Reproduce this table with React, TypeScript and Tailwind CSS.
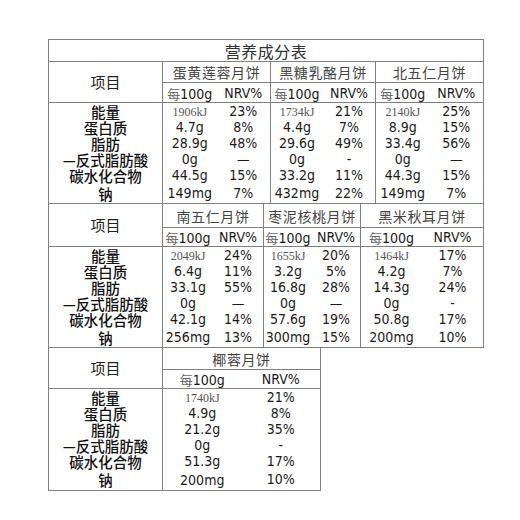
const CJK = "font-['Noto_Sans_CJK_SC',sans-serif]";
const NUM = "font-['DejaVu_Sans','Noto_Sans',sans-serif] font-stretch-condensed";

const LABELS = ["能量", "蛋白质", "脂肪", "—反式脂肪酸", "碳水化合物", "钠"];

type Product = { name: string; values: string[]; nrv: string[] };

const s1: Product[] = [
  { name: "蛋黄莲蓉月饼", values: ["1906kJ", "4.7g", "28.9g", "0g", "44.5g", "149mg"], nrv: ["23%", "8%", "48%", "—", "15%", "7%"] },
  { name: "黑糖乳酪月饼", values: ["1734kJ", "4.4g", "29.6g", "0g", "33.2g", "432mg"], nrv: ["21%", "7%", "49%", "-", "11%", "22%"] },
  { name: "北五仁月饼", values: ["2140kJ", "8.9g", "33.4g", "0g", "44.3g", "149mg"], nrv: ["25%", "15%", "56%", "—", "15%", "7%"] },
];

const s2: Product[] = [
  { name: "南五仁月饼", values: ["2049kJ", "6.4g", "33.1g", "0g", "42.1g", "256mg"], nrv: ["24%", "11%", "55%", "—", "14%", "13%"] },
  { name: "枣泥核桃月饼", values: ["1655kJ", "3.2g", "16.8g", "0g", "57.6g", "300mg"], nrv: ["20%", "5%", "28%", "—", "19%", "15%"] },
  { name: "黑米秋耳月饼", values: ["1464kJ", "4.2g", "14.3g", "0g", "50.8g", "200mg"], nrv: ["17%", "7%", "24%", "-", "17%", "10%"] },
];

const s3: Product[] = [
  { name: "椰蓉月饼", values: ["1740kJ", "4.9g", "21.2g", "0g", "51.3g", "200mg"], nrv: ["21%", "8%", "35%", "-", "17%", "10%"] },
];

function Value({ v }: { v: string }) {
  if (v.endsWith("kJ")) {
    return <span className="font-['Liberation_Serif',serif] text-[12px] text-[#555]">{v}</span>;
  }
  return <span className={`${NUM} text-[14px] text-[#1a1a1a]`}>{v}</span>;
}

function Section({
  products,
  widths,
  outer,
  headH,
  subH,
  lastH,
  title,
}: {
  products: Product[];
  widths: string[];
  outer: string;
  headH: string;
  subH: string;
  lastH: string;
  title?: string;
}) {
  const cellW = (i: number) => (i === products.length - 1 ? "flex-1" : `${widths[i]} border-r border-[#808080]`);
  return (
    <div className={outer}>
      {title && (
        <div className={`h-[22px] border-b border-[#808080] flex items-center justify-center ${CJK} text-[16px] leading-[18px] text-[#333] tracking-[0.5px]`}>
          {title}
        </div>
      )}
      <div className="flex border-b border-[#808080]">
        <div className={`w-[114px] border-r border-[#808080] flex items-center justify-center ${CJK} text-[15px] leading-[16px] text-[#222]`}>
          项目
        </div>
        {products.map((p, i) => (
          <div key={p.name} className={`${cellW(i)} flex flex-col`}>
            <div className={`${headH} border-b border-[#808080] flex items-center justify-center ${CJK} text-[14px] leading-[16px] text-[#444] tracking-[0.6px]`}>
              {p.name}
            </div>
            <div className={`${subH} flex items-center`}>
              <div className="flex-1 text-center leading-none">
                <span className={`${CJK} text-[13px] text-[#666]`}>每</span>
                <span className={`${NUM} text-[14px] text-[#1a1a1a]`}>100g</span>
              </div>
              <div className={`flex-1 text-center leading-none ${NUM} text-[14px] text-[#1a1a1a]`}>NRV%</div>
            </div>
          </div>
        ))}
      </div>
      {LABELS.map((label, r) => (
        <div key={label} className={`flex ${r === LABELS.length - 1 ? lastH : "h-[16px]"}`}>
          <div className={`w-[114px] border-r border-[#808080] flex items-center justify-center ${CJK} font-medium text-[14.5px] leading-[15px] text-[#111]`}>
            {label}
          </div>
          {products.map((p, i) => (
            <div key={p.name} className={`${cellW(i)} flex items-center leading-[15px]`}>
              <div className="flex-1 text-center">
                <Value v={p.values[r]} />
              </div>
              <div className={`flex-1 text-center ${NUM} text-[14px] text-[#1a1a1a]`}>{p.nrv[r]}</div>
            </div>
          ))}
        </div>
      ))}
    </div>
  );
}

export default function App() {
  return (
    <div className="w-[520px] h-[520px] bg-white pt-[39px] pl-[48px]">
      <Section
        title="营养成分表"
        products={s1}
        widths={["w-[108px]", "w-[105px]"]}
        outer="w-[436px] border border-[#808080]"
        headH="h-[21px]"
        subH="h-[19px]"
        lastH="h-[20px]"
      />
      <Section
        products={s2}
        widths={["w-[101px]", "w-[97px]"]}
        outer="w-[436px] border-x border-b border-[#808080]"
        headH="h-[24px]"
        subH="h-[18px]"
        lastH="h-[20px]"
      />
      <Section
        products={s3}
        widths={[]}
        outer="w-[273px] border-x border-b border-[#808080]"
        headH="h-[22px]"
        subH="h-[18px]"
        lastH="h-[21px]"
      />
    </div>
  );
}
